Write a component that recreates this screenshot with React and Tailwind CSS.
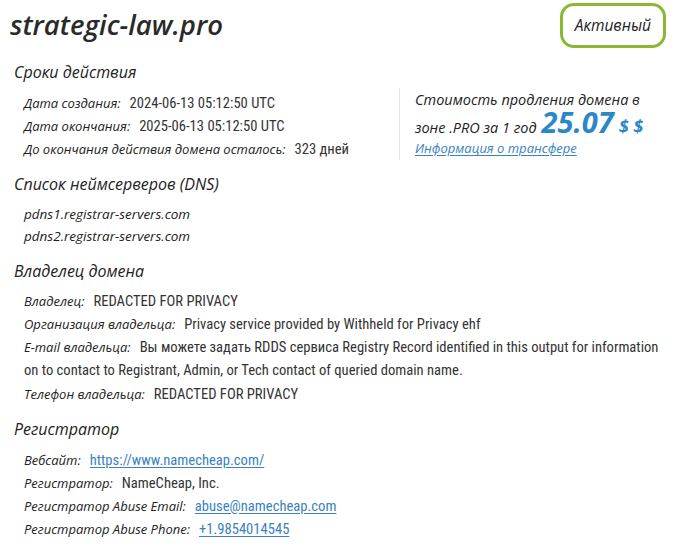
const head = "font-['Open_Sans',sans-serif] italic";
const val = "font-['Roboto_Condensed','Liberation_Sans',sans-serif] text-[14.6px] text-[#333]";

function Row({ label, children, h = 'h-[23px] leading-[23px]' }) {
  return (
    <div className={`flex items-baseline ${h}`}>
      <span className={`${head} text-[13px] text-[#222] mr-[9px]`}>{label}:</span>
      <span className={val}>{children}</span>
    </div>
  );
}

function Section({ title, children, className = '', bodyClass = 'mt-[9px]' }) {
  return (
    <section className={className}>
      <h2 className={`${head} text-[16px] font-medium text-[#222] leading-[20px] pl-[4px]`}>{title}</h2>
      <div className={`pl-[14px] ${bodyClass}`}>{children}</div>
    </section>
  );
}

const link = 'text-[#3a82c0] underline underline-offset-2';
const ownerRow = 'h-[23.25px] leading-[23.25px]';

export default function App() {
  return (
    <div className="w-[675px] h-[547px] bg-white text-[#222] px-[10px] pt-[3px] overflow-hidden">
      {/* Title */}
      <div className="flex items-start justify-between">
        <h1 className={`${head} font-semibold text-[27.5px] leading-[32px] mt-[6px] text-[#2a2a2a]`}>strategic-law.pro</h1>
        <div className={`${head} font-medium text-[15.5px] border-[3px] border-[#8ab833] rounded-[14px] px-[12px] h-[45px] flex items-center text-[#222] mr-[-1px]`}>
          Активный
        </div>
      </div>

      {/* Сроки действия */}
      <div className="flex mt-[14px]">
        <Section title="Сроки действия" className="w-[389px]" bodyClass="mt-[9.5px]">
          <Row label="Дата создания">2024-06-13 05:12:50 UTC</Row>
          <Row label="Дата окончания">2025-06-13 05:12:50 UTC</Row>
          <Row label="До окончания действия домена осталось">323 дней</Row>
        </Section>
        <div className="border-l border-[#e6e6e6] mt-[26px] h-[72px] pl-[15px] pt-[1px]">
          <div className={`${head} font-medium text-[14.5px] leading-[22px] text-[#222] whitespace-nowrap`}>
            Стоимость продления домена в
          </div>
          <div className={`${head} font-medium text-[14.5px] h-[26px] leading-[26px] text-[#222] flex items-baseline whitespace-nowrap`}>
            зоне .PRO за 1 год
            <span className="text-[29px] font-bold text-[#2a88c6] ml-[5px] leading-[22px]">25.07</span>
            <span className="text-[18px] font-bold text-[#2a88c6] ml-[5px] leading-[22px]">$ $</span>
          </div>
          <a href="#" className={`${head} text-[13px] ${link} leading-[22px] block`}>Информация о трансфере</a>
        </div>
      </div>

      {/* DNS */}
      <Section title="Список неймсерверов (DNS)" className="mt-[13.5px]">
        <div className={`${head} text-[13.5px] h-[22px] leading-[22px]`}>pdns1.registrar-servers.com</div>
        <div className={`${head} text-[13.5px] h-[22px] leading-[22px]`}>pdns2.registrar-servers.com</div>
      </Section>

      {/* Владелец */}
      <Section title="Владелец домена" className="mt-[14px]" bodyClass="mt-[8.5px]">
        <Row label="Владелец" h={ownerRow}>REDACTED FOR PRIVACY</Row>
        <Row label="Организация владельца" h={ownerRow}>Privacy service provided by Withheld for Privacy ehf</Row>
        <div className={`flex items-baseline whitespace-nowrap ${ownerRow}`}>
          <span className={`${head} text-[13px] text-[#222] mr-[9px]`}>E-mail владельца:</span>
          <span className={val}>Вы можете задать RDDS сервиса Registry Record identified in this output for information</span>
        </div>
        <div className={`${val} ${ownerRow}`}>on to contact to Registrant, Admin, or Tech contact of queried domain name.</div>
        <Row label="Телефон владельца" h={ownerRow}>REDACTED FOR PRIVACY</Row>
      </Section>

      {/* Регистратор */}
      <Section title="Регистратор" className="mt-[13.25px]" bodyClass="mt-[9.5px]">
        <Row label="Вебсайт"><a href="#" className={link}>https://www.namecheap.com/</a></Row>
        <Row label="Регистратор">NameCheap, Inc.</Row>
        <Row label="Регистратор Abuse Email"><a href="#" className={link}>abuse@namecheap.com</a></Row>
        <Row label="Регистратор Abuse Phone"><a href="#" className={link}>+1.9854014545</a></Row>
      </Section>
    </div>
  );
}
